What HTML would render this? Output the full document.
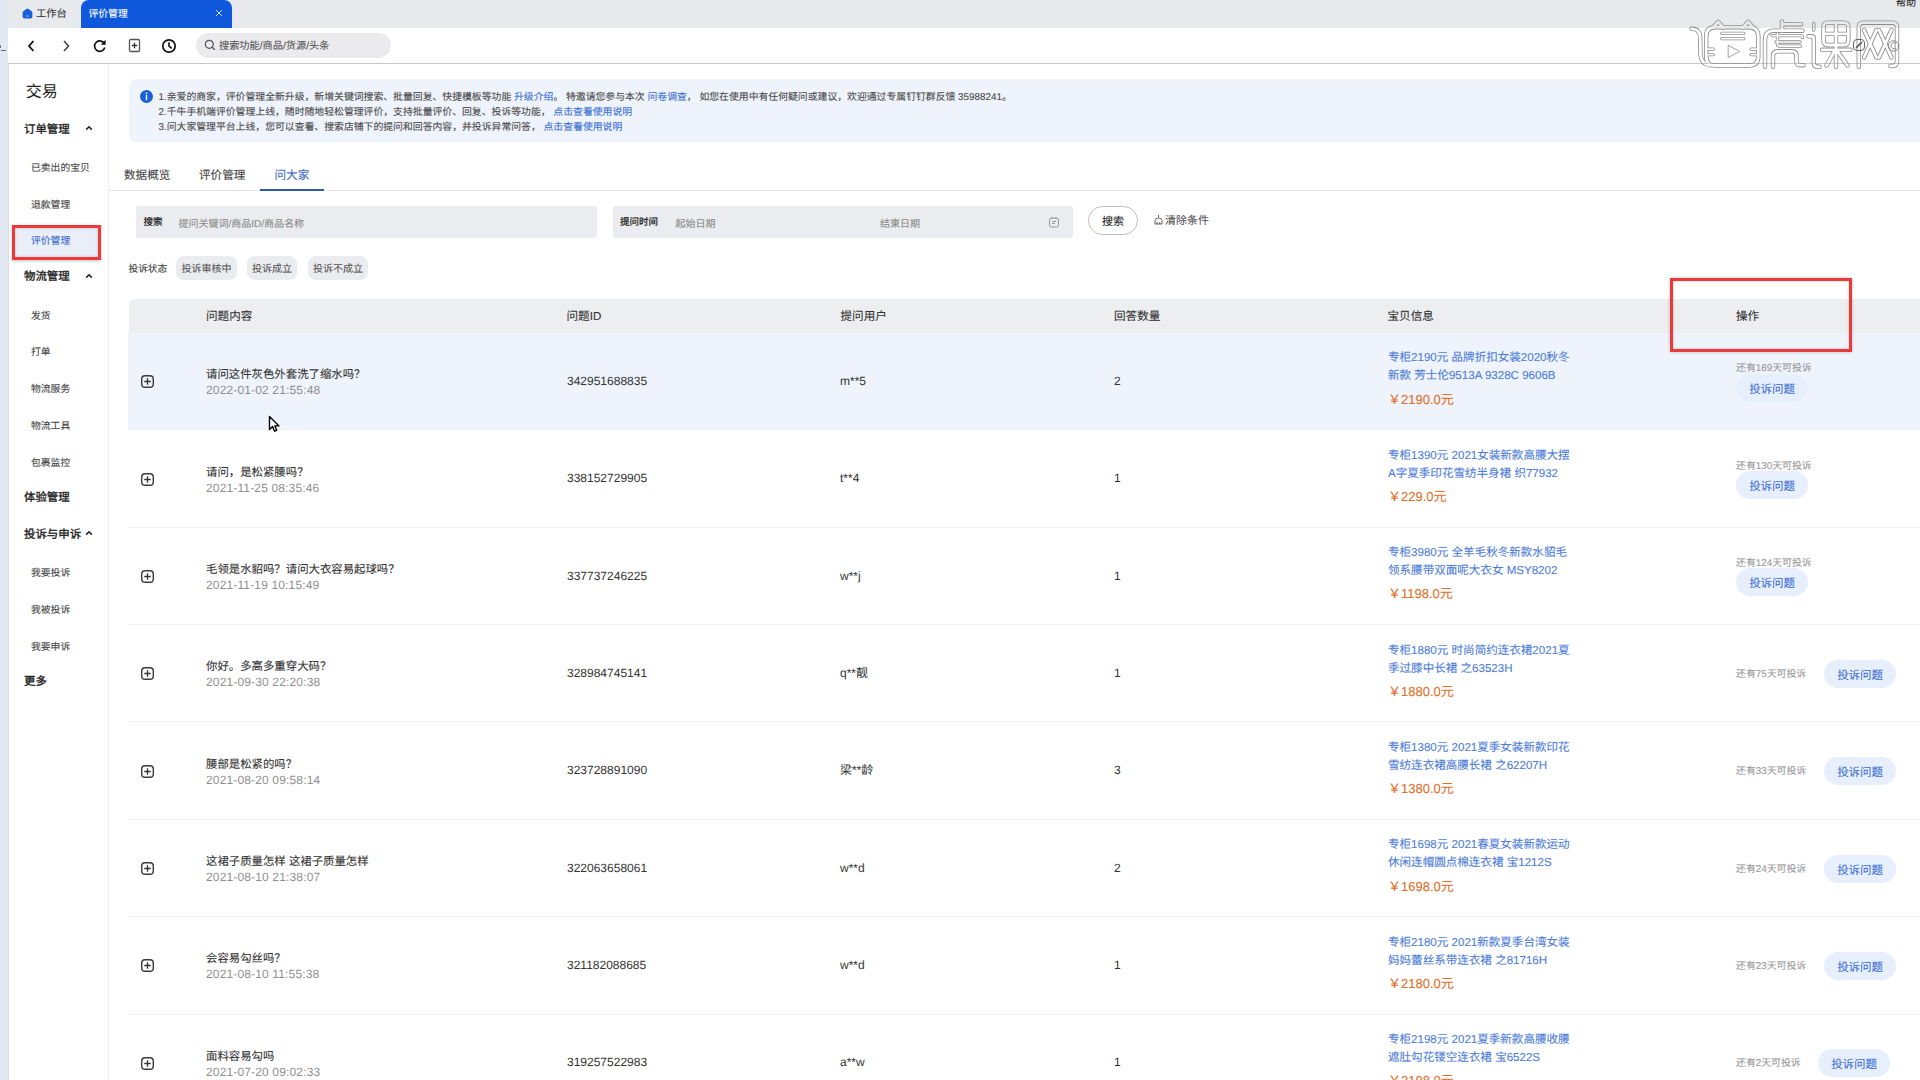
<!DOCTYPE html>
<html lang="zh-CN"><head><meta charset="utf-8">
<style>
*{box-sizing:border-box}
html,body{margin:0;padding:0}
body{text-rendering:geometricPrecision;-webkit-text-stroke-width:0.1px;width:1920px;height:1080px;position:relative;overflow:hidden;background:#fff;font-family:"Liberation Sans",sans-serif;color:#333}
.a{position:absolute;white-space:nowrap}
#strip{left:0;top:0;width:9px;height:1080px;background:#e3e9f4;border-right:1px solid #dcdde2}
#tabbar{left:8px;top:0;width:1912px;height:28px;background:#e8e9ed}
#acttab{left:81px;top:0;width:151px;height:28px;background:#0f58dc;border-radius:8px 8px 0 0}
#nav{left:8px;top:28px;width:1912px;height:36px;background:#fff;border-bottom:1px solid #c9c9c9}
#side{left:9px;top:64px;width:100px;height:1016px;background:#fff;border-right:1px solid #eeeeee}
.sh{font-size:11.45px;line-height:14px;color:#222;-webkit-text-stroke-width:0.35px}
.sc{font-size:9.8px;line-height:12px;color:#444}
#notice{left:129px;top:79px;width:1800px;height:63px;background:#eff3fb;border-radius:7px}
.nt{font-size:9.85px;line-height:12px;color:#4a4a4a}
.lk{color:#3a6fd6}
.tab{font-size:11.6px;line-height:14px;color:#444;top:168.5px}
.box{background:#ebecef;border-radius:2px}
.lab{font-size:9.5px;line-height:12px;color:#222;-webkit-text-stroke-width:0.25px}
.ph{font-size:10px;line-height:12px;color:#8a8a8a}
.chip{background:#ebecef;border-radius:8px;height:24px;top:256px;font-size:10px;line-height:27px;color:#555;text-align:center}
#thead{left:129px;top:298.5px;width:1800px;height:34.6px;background:#edeef0;border-radius:6px 0 0 0}
.th{font-size:11.6px;line-height:14px;color:#333;top:309.7px}
#tbody{left:128px;top:0;width:1800px;height:1080px}
.row{left:0;width:1800px;border-bottom:1px solid #efefef}
.plus{width:13px;height:13px}
.q{font-size:11.4px;line-height:13px;color:#333}
.dt{font-size:12px;line-height:14px;color:#8f8f8f;-webkit-text-stroke-width:0;letter-spacing:0.15px}
.num{font-size:12px;line-height:14px;color:#333;-webkit-text-stroke-width:0}
.prod{font-size:11.55px;line-height:18px;color:#4d7dd8}
.price{font-size:13px;line-height:15px;color:#e0702a}
.days{font-size:9.9px;line-height:12px;color:#999}
.btn{width:72px;height:28px;border-radius:14px;background:#e8effc;color:#3f72d6;-webkit-text-stroke-width:0.1px;font-size:11.45px;line-height:32px;text-align:center}
</style></head><body>
<div class="a" id="strip"></div>
<div class="a" id="tabbar"></div>
<div class="a" style="left:0;top:45px;width:1px;height:3px;background:#777"></div><div class="a" style="left:1px;top:50px;width:5px;height:1px;background:#666"></div>
<svg class="a" style="left:22px;top:8px" width="11" height="11" viewBox="0 0 11 11"><path d="M0.6 4.8 Q0.6 3.8 1.6 3 L4.4 0.9 Q5.5 0.1 6.6 0.9 L9.4 3 Q10.4 3.8 10.4 4.8 L10.4 8.8 Q10.4 10.6 8.6 10.6 L2.4 10.6 Q0.6 10.6 0.6 8.8 Z" fill="#1a5fd8"/><rect x="4.6" y="7.6" width="1.8" height="0.9" fill="#cfe0ff"/></svg>
<div class="a" style="left:36px;top:8px;font-size:10.3px;line-height:13px;color:#333">工作台</div>
<div class="a" id="acttab"></div>
<div class="a" style="left:88.5px;top:8px;font-size:9.8px;line-height:13px;color:#fff">评价管理</div>
<svg class="a" style="left:215px;top:9px" width="8" height="8" viewBox="0 0 8 8"><path d="M1 1 L7 7 M7 1 L1 7" stroke="#fff" stroke-width="0.8"/></svg>
<div class="a" style="left:1896px;top:-2px;font-size:10px;line-height:12px;color:#222">帮助</div>
<div class="a" id="nav"></div>
<svg class="a" style="left:26px;top:39px" width="12" height="14" viewBox="0 0 12 14"><path d="M7.5 2 L3 7 L7.5 12" fill="none" stroke="#111" stroke-width="1.8"/></svg>
<svg class="a" style="left:60px;top:39px" width="12" height="14" viewBox="0 0 12 14"><path d="M4 2 L8.5 7 L4 12" fill="none" stroke="#444" stroke-width="1.6"/></svg>
<svg class="a" style="left:92px;top:38px" width="16" height="16" viewBox="0 0 16 16"><path d="M12.6 6.2 A5.2 5.2 0 1 0 12.8 9.5" fill="none" stroke="#111" stroke-width="1.7"/><path d="M13.6 1.8 L13.6 6.8 L8.8 6.8 Z" fill="#111"/></svg>
<svg class="a" style="left:128px;top:38px" width="14" height="16" viewBox="0 0 14 16"><rect x="1.5" y="1.5" width="10" height="12" rx="1.2" fill="none" stroke="#555" stroke-width="1.3"/><path d="M6.5 4.8 V10.2 M3.8 7.5 H9.2" stroke="#333" stroke-width="1.3"/></svg>
<svg class="a" style="left:161px;top:38px" width="16" height="16" viewBox="0 0 16 16"><circle cx="8" cy="8" r="6.2" fill="none" stroke="#111" stroke-width="1.7"/><path d="M8 4.2 V8.2 L10.8 10.4" fill="none" stroke="#111" stroke-width="1.6"/></svg>
<div class="a" style="left:196px;top:33px;width:195px;height:25px;border-radius:13px;background:#ebebee"></div>
<svg class="a" style="left:204px;top:39px" width="12" height="12" viewBox="0 0 12 12"><circle cx="5.3" cy="5.3" r="4" fill="none" stroke="#555" stroke-width="1.2"/><path d="M8.2 8.2 L10.8 10.8" stroke="#555" stroke-width="1.3"/></svg>
<div class="a" style="left:219px;top:41px;font-size:10.2px;line-height:12px;color:#555">搜索功能/商品/货源/头条</div>

<div class="a" id="side"></div>
<div class="a" style="left:25.8px;top:82.5px;font-size:16px;line-height:19px;color:#222;-webkit-text-stroke-width:0">交易</div>
<div class="a" style="left:12px;top:225px;width:89px;height:35px;background:#e9eef8;border:3px solid #eb3a3a;box-shadow:0 1px 3px rgba(0,0,0,.25), inset 0 0 3px rgba(0,0,0,.22)"></div>
<div class="a sh" style="left:24px;top:122.5px">订单管理</div>
<svg class="a" style="left:85px;top:125.0px" width="8" height="6" viewBox="0 0 8 6"><path d="M1.2 4.6 L4 1.8 L6.8 4.6" fill="none" stroke="#222" stroke-width="1.6"/></svg>
<div class="a sc" style="left:31px;top:163.2px;color:#444">已卖出的宝贝</div>
<div class="a sc" style="left:31px;top:200.2px;color:#444">退款管理</div>
<div class="a sc" style="left:31px;top:236.0px;color:#3b6bd0">评价管理</div>
<div class="a sh" style="left:24px;top:270.1px">物流管理</div>
<svg class="a" style="left:85px;top:272.6px" width="8" height="6" viewBox="0 0 8 6"><path d="M1.2 4.6 L4 1.8 L6.8 4.6" fill="none" stroke="#222" stroke-width="1.6"/></svg>
<div class="a sc" style="left:31px;top:310.5px;color:#444">发货</div>
<div class="a sc" style="left:31px;top:347.0px;color:#444">打单</div>
<div class="a sc" style="left:31px;top:383.7px;color:#444">物流服务</div>
<div class="a sc" style="left:31px;top:420.7px;color:#444">物流工具</div>
<div class="a sc" style="left:31px;top:457.7px;color:#444">包裹监控</div>
<div class="a sh" style="left:24px;top:490.5px">体验管理</div>
<div class="a sh" style="left:24px;top:527.5px">投诉与申诉</div>
<svg class="a" style="left:85px;top:530.0px" width="8" height="6" viewBox="0 0 8 6"><path d="M1.2 4.6 L4 1.8 L6.8 4.6" fill="none" stroke="#222" stroke-width="1.6"/></svg>
<div class="a sc" style="left:31px;top:567.7px;color:#444">我要投诉</div>
<div class="a sc" style="left:31px;top:604.7px;color:#444">我被投诉</div>
<div class="a sc" style="left:31px;top:641.7px;color:#444">我要申诉</div>
<div class="a sh" style="left:24px;top:674.5px">更多</div>

<div class="a" id="notice"></div>
<svg class="a" style="left:139.5px;top:89.5px" width="13" height="13" viewBox="0 0 13 13"><circle cx="6.5" cy="6.5" r="6.5" fill="#1a5fd6"/><rect x="5.8" y="2.6" width="1.4" height="1.5" fill="#fff"/><rect x="5.8" y="5" width="1.4" height="5.2" fill="#fff"/></svg>
<div class="a nt" style="left:158.5px;top:91.5px">1.亲爱的商家，评价管理全新升级，新增关键词搜索、批量回复、快捷模板等功能 <span class="lk">升级介绍</span>。 特邀请您参与本次 <span class="lk">问卷调查</span>， 如您在使用中有任何疑问或建议，欢迎通过专属钉钉群反馈 35988241。</div>
<div class="a nt" style="left:158.5px;top:106.5px">2.千牛手机端评价管理上线，随时随地轻松管理评价，支持批量评价、回复、投诉等功能， <span class="lk">点击查看使用说明</span></div>
<div class="a nt" style="left:158.5px;top:121.5px">3.问大家管理平台上线，您可以查看、搜索店铺下的提问和回答内容，并投诉异常问答， <span class="lk">点击查看使用说明</span></div>

<div class="a tab" style="left:124px">数据概览</div>
<div class="a tab" style="left:199px">评价管理</div>
<div class="a tab" style="left:274.5px;color:#3d6bc4">问大家</div>
<div class="a" style="left:109px;top:190px;width:1811px;height:1px;background:#e3e5ea"></div>
<div class="a" style="left:260px;top:189px;width:64px;height:2px;background:#2f5ca6"></div>

<div class="a box" style="left:136px;top:205.5px;width:461px;height:32px"></div>
<div class="a lab" style="left:143.5px;top:217px">搜索</div>
<div class="a ph" style="left:178.5px;top:219px">提问关键词/商品ID/商品名称</div>
<div class="a box" style="left:613px;top:205.5px;width:460px;height:32px"></div>
<div class="a lab" style="left:620px;top:217px">提问时间</div>
<div class="a ph" style="left:675.5px;top:218.5px">起始日期</div>
<div class="a ph" style="left:880px;top:218.5px">结束日期</div>
<svg class="a" style="left:1048px;top:216px" width="12" height="12" viewBox="0 0 12 12"><rect x="1.5" y="2" width="9" height="9" rx="2" fill="none" stroke="#999" stroke-width="1"/><path d="M4 1 V3 M8 1 V3 M4 5.5 H8 M4 7.5 H7" stroke="#999" stroke-width="1"/></svg>
<div class="a" style="left:1088px;top:205.5px;width:50px;height:29.5px;border:1px solid #bdbdbd;border-radius:15px;background:#fff"></div>
<div class="a" style="left:1102px;top:215.5px;font-size:11px;line-height:13px;color:#222">搜索</div>
<svg class="a" style="left:1153px;top:214px" width="11" height="11" viewBox="0 0 11 11"><path d="M5.5 1 V3.5 M2 10 V6.5 Q2 4 5.5 4 Q9 4 9 6.5 V10 Z M4.2 10 V8 M6.8 10 V8" fill="none" stroke="#666" stroke-width="1"/></svg>
<div class="a" style="left:1165px;top:215px;font-size:11px;line-height:13px;color:#555">清除条件</div>

<div class="a" style="left:128.5px;top:264px;font-size:9.7px;line-height:12px;color:#444">投诉状态</div>
<div class="a chip" style="left:176px;width:61px">投诉审核中</div>
<div class="a chip" style="left:247px;width:50px">投诉成立</div>
<div class="a chip" style="left:308px;width:60px">投诉不成立</div>

<div class="a" id="thead"></div>
<div class="a th" style="left:206px">问题内容</div>
<div class="a th" style="left:566.5px">问题ID</div>
<div class="a th" style="left:840.5px">提问用户</div>
<div class="a th" style="left:1114px">回答数量</div>
<div class="a th" style="left:1387.5px">宝贝信息</div>
<div class="a th" style="left:1736px">操作</div>

<div class="a" id="tbody">
<div class="a row" style="top:333.10px;height:97.35px;background:#eff3fc">
<svg class="a plus" style="left:12.7px;top:42.07px" width="13" height="13" viewBox="0 0 13 13"><rect x="0.7" y="0.7" width="11.6" height="11.6" rx="3.3" fill="none" stroke="#3a3a3a" stroke-width="1.4"/><path d="M3.3 6.5 H9.7 M6.5 3.3 V9.7" stroke="#333" stroke-width="1.3"/></svg>
<div class="a q" style="left:78px;top:36.17px">请问这件灰色外套洗了缩水吗？</div>
<div class="a dt" style="left:78px;top:50.17px">2022-01-02 21:55:48</div>
<div class="a num" style="left:439px;top:40.88px">342951688835</div>
<div class="a num" style="left:712px;top:40.88px">m**5</div>
<div class="a num" style="left:986px;top:40.88px">2</div>
<div class="a prod" style="left:1260px;top:16.38px">专柜2190元 品牌折扣女装2020秋冬<br>新款 芳士伦9513A 9328C 9606B</div>
<div class="a price" style="left:1260px;top:58.67px">￥2190.0元</div>
<div class="a days" style="left:1608px;top:30.17px">还有169天可投诉</div>
<div class="a btn" style="left:1608px;top:40.67px">投诉问题</div>
</div>
<div class="a row" style="top:430.45px;height:97.35px;background:#fff">
<svg class="a plus" style="left:12.7px;top:42.07px" width="13" height="13" viewBox="0 0 13 13"><rect x="0.7" y="0.7" width="11.6" height="11.6" rx="3.3" fill="none" stroke="#3a3a3a" stroke-width="1.4"/><path d="M3.3 6.5 H9.7 M6.5 3.3 V9.7" stroke="#333" stroke-width="1.3"/></svg>
<div class="a q" style="left:78px;top:36.17px">请问，是松紧腰吗？</div>
<div class="a dt" style="left:78px;top:50.17px">2021-11-25 08:35:46</div>
<div class="a num" style="left:439px;top:40.88px">338152729905</div>
<div class="a num" style="left:712px;top:40.88px">t**4</div>
<div class="a num" style="left:986px;top:40.88px">1</div>
<div class="a prod" style="left:1260px;top:16.38px">专柜1390元 2021女装新款高腰大摆<br>A字夏季印花雪纺半身裙 织77932</div>
<div class="a price" style="left:1260px;top:58.67px">￥229.0元</div>
<div class="a days" style="left:1608px;top:30.17px">还有130天可投诉</div>
<div class="a btn" style="left:1608px;top:40.67px">投诉问题</div>
</div>
<div class="a row" style="top:527.80px;height:97.35px;background:#fff">
<svg class="a plus" style="left:12.7px;top:42.07px" width="13" height="13" viewBox="0 0 13 13"><rect x="0.7" y="0.7" width="11.6" height="11.6" rx="3.3" fill="none" stroke="#3a3a3a" stroke-width="1.4"/><path d="M3.3 6.5 H9.7 M6.5 3.3 V9.7" stroke="#333" stroke-width="1.3"/></svg>
<div class="a q" style="left:78px;top:36.17px">毛领是水貂吗？请问大衣容易起球吗？</div>
<div class="a dt" style="left:78px;top:50.17px">2021-11-19 10:15:49</div>
<div class="a num" style="left:439px;top:40.88px">337737246225</div>
<div class="a num" style="left:712px;top:40.88px">w**j</div>
<div class="a num" style="left:986px;top:40.88px">1</div>
<div class="a prod" style="left:1260px;top:16.38px">专柜3980元 全羊毛秋冬新款水貂毛<br>领系腰带双面呢大衣女 MSY8202</div>
<div class="a price" style="left:1260px;top:58.67px">￥1198.0元</div>
<div class="a days" style="left:1608px;top:30.17px">还有124天可投诉</div>
<div class="a btn" style="left:1608px;top:40.67px">投诉问题</div>
</div>
<div class="a row" style="top:625.15px;height:97.35px;background:#fff">
<svg class="a plus" style="left:12.7px;top:42.07px" width="13" height="13" viewBox="0 0 13 13"><rect x="0.7" y="0.7" width="11.6" height="11.6" rx="3.3" fill="none" stroke="#3a3a3a" stroke-width="1.4"/><path d="M3.3 6.5 H9.7 M6.5 3.3 V9.7" stroke="#333" stroke-width="1.3"/></svg>
<div class="a q" style="left:78px;top:36.17px">你好。多高多重穿大码？</div>
<div class="a dt" style="left:78px;top:50.17px">2021-09-30 22:20:38</div>
<div class="a num" style="left:439px;top:40.88px">328984745141</div>
<div class="a num" style="left:712px;top:40.88px">q**靓</div>
<div class="a num" style="left:986px;top:40.88px">1</div>
<div class="a prod" style="left:1260px;top:16.38px">专柜1880元 时尚简约连衣裙2021夏<br>季过膝中长裙 之63523H</div>
<div class="a price" style="left:1260px;top:58.67px">￥1880.0元</div>
<div class="a days" style="left:1608px;top:43.67px">还有75天可投诉</div>
<div class="a btn" style="left:1696px;top:34.67px">投诉问题</div>
</div>
<div class="a row" style="top:722.50px;height:97.35px;background:#fff">
<svg class="a plus" style="left:12.7px;top:42.07px" width="13" height="13" viewBox="0 0 13 13"><rect x="0.7" y="0.7" width="11.6" height="11.6" rx="3.3" fill="none" stroke="#3a3a3a" stroke-width="1.4"/><path d="M3.3 6.5 H9.7 M6.5 3.3 V9.7" stroke="#333" stroke-width="1.3"/></svg>
<div class="a q" style="left:78px;top:36.17px">腰部是松紧的吗？</div>
<div class="a dt" style="left:78px;top:50.17px">2021-08-20 09:58:14</div>
<div class="a num" style="left:439px;top:40.88px">323728891090</div>
<div class="a num" style="left:712px;top:40.88px">梁**龄</div>
<div class="a num" style="left:986px;top:40.88px">3</div>
<div class="a prod" style="left:1260px;top:16.38px">专柜1380元 2021夏季女装新款印花<br>雪纺连衣裙高腰长裙 之62207H</div>
<div class="a price" style="left:1260px;top:58.67px">￥1380.0元</div>
<div class="a days" style="left:1608px;top:43.67px">还有33天可投诉</div>
<div class="a btn" style="left:1696px;top:34.67px">投诉问题</div>
</div>
<div class="a row" style="top:819.85px;height:97.35px;background:#fff">
<svg class="a plus" style="left:12.7px;top:42.07px" width="13" height="13" viewBox="0 0 13 13"><rect x="0.7" y="0.7" width="11.6" height="11.6" rx="3.3" fill="none" stroke="#3a3a3a" stroke-width="1.4"/><path d="M3.3 6.5 H9.7 M6.5 3.3 V9.7" stroke="#333" stroke-width="1.3"/></svg>
<div class="a q" style="left:78px;top:36.17px">这裙子质量怎样 这裙子质量怎样</div>
<div class="a dt" style="left:78px;top:50.17px">2021-08-10 21:38:07</div>
<div class="a num" style="left:439px;top:40.88px">322063658061</div>
<div class="a num" style="left:712px;top:40.88px">w**d</div>
<div class="a num" style="left:986px;top:40.88px">2</div>
<div class="a prod" style="left:1260px;top:16.38px">专柜1698元 2021春夏女装新款运动<br>休闲连帽圆点棉连衣裙 宝1212S</div>
<div class="a price" style="left:1260px;top:58.67px">￥1698.0元</div>
<div class="a days" style="left:1608px;top:43.67px">还有24天可投诉</div>
<div class="a btn" style="left:1696px;top:34.67px">投诉问题</div>
</div>
<div class="a row" style="top:917.20px;height:97.35px;background:#fff">
<svg class="a plus" style="left:12.7px;top:42.07px" width="13" height="13" viewBox="0 0 13 13"><rect x="0.7" y="0.7" width="11.6" height="11.6" rx="3.3" fill="none" stroke="#3a3a3a" stroke-width="1.4"/><path d="M3.3 6.5 H9.7 M6.5 3.3 V9.7" stroke="#333" stroke-width="1.3"/></svg>
<div class="a q" style="left:78px;top:36.17px">会容易勾丝吗？</div>
<div class="a dt" style="left:78px;top:50.17px">2021-08-10 11:55:38</div>
<div class="a num" style="left:439px;top:40.88px">321182088685</div>
<div class="a num" style="left:712px;top:40.88px">w**d</div>
<div class="a num" style="left:986px;top:40.88px">1</div>
<div class="a prod" style="left:1260px;top:16.38px">专柜2180元 2021新款夏季台湾女装<br>妈妈蕾丝系带连衣裙 之81716H</div>
<div class="a price" style="left:1260px;top:58.67px">￥2180.0元</div>
<div class="a days" style="left:1608px;top:43.67px">还有23天可投诉</div>
<div class="a btn" style="left:1696px;top:34.67px">投诉问题</div>
</div>
<div class="a row" style="top:1014.55px;height:97.35px;background:#fff">
<svg class="a plus" style="left:12.7px;top:42.07px" width="13" height="13" viewBox="0 0 13 13"><rect x="0.7" y="0.7" width="11.6" height="11.6" rx="3.3" fill="none" stroke="#3a3a3a" stroke-width="1.4"/><path d="M3.3 6.5 H9.7 M6.5 3.3 V9.7" stroke="#333" stroke-width="1.3"/></svg>
<div class="a q" style="left:78px;top:36.17px">面料容易勾吗</div>
<div class="a dt" style="left:78px;top:50.17px">2021-07-20 09:02:33</div>
<div class="a num" style="left:439px;top:40.88px">319257522983</div>
<div class="a num" style="left:712px;top:40.88px">a**w</div>
<div class="a num" style="left:986px;top:40.88px">1</div>
<div class="a prod" style="left:1260px;top:16.38px">专柜2198元 2021夏季新款高腰收腰<br>遮肚勾花镂空连衣裙 宝6522S</div>
<div class="a price" style="left:1260px;top:58.67px">￥2198.0元</div>
<div class="a days" style="left:1608px;top:43.67px">还有2天可投诉</div>
<div class="a btn" style="left:1690px;top:34.67px">投诉问题</div>
</div>
</div>

<div class="a" style="left:1670px;top:278px;width:182px;height:74px;border:3px solid #eb3a3a;box-shadow:0 0 3px rgba(0,0,0,.25), inset 0 0 3px rgba(0,0,0,.2)"></div>

<svg class="a" style="left:268px;top:415px" width="13" height="18" viewBox="0 0 13 18"><path d="M1.5 1.5 L1.5 14.6 L4.6 11.6 L6.6 16.2 L8.7 15.3 L6.9 10.9 L11 10.9 Z" fill="#fff" stroke="#000" stroke-width="1.4" stroke-linejoin="round"/></svg>

<svg class="a" style="left:1680px;top:15px" width="230" height="60" viewBox="1680 15 230 60">
<mask id="lm" maskUnits="userSpaceOnUse" x="1680" y="15" width="230" height="60"><rect x="1680" y="15" width="230" height="60" fill="#fff"/><g fill="none" stroke="#000" stroke-width="2.8" stroke-linecap="round" stroke-linejoin="round"><path d="M1715 27.2 H1749 Q1758.3 27.2 1758.3 36.5 V56.2 Q1758.3 65.5 1749 65.5 H1715.5 Q1706.2 65.5 1706.2 56.2 V36.5 Q1706.2 27.2 1715 27.2 Z"/><path d="M1713 27.5 L1718.3 21.8 L1723 27.5"/><path d="M1743 27.5 L1748.3 21.8 L1753 27.5"/><path d="M1691.5 28.8 Q1700 28.5 1700.2 38 L1700.5 55 Q1701.5 64.5 1710 65.3"/><path d="M1765 66.8 V40 Q1765 30.7 1774 30.7 H1802.5"/><path d="M1782 21.5 V31"/><path d="M1784 24.2 H1801"/><path d="M1773 66.8 V56 Q1773 51.3 1778 51.3 H1792 Q1796.5 51.3 1796.5 56 V62 Q1796.5 65.2 1800 65.2 H1803.5"/><path d="M1808.5 36.3 H1811.5 Q1813.8 36.3 1813.8 39 V63 Q1813.8 66.8 1818 66.8 H1819.5"/><path d="M1828 22.6 H1844 Q1848.3 22.6 1848.3 27 V40.5 Q1848.3 45 1844 45 H1828 Q1823.5 45 1823.5 40.5 V27 Q1823.5 22.6 1828 22.6 Z"/><path d="M1836 22.6 V66.8"/><path d="M1823.5 33.9 H1848.3"/><path d="M1822 49.8 H1850.5"/><path d="M1834 52 L1826.5 65.5"/><path d="M1838 52 L1847.5 65.5"/><path d="M1858.8 66.8 V27 Q1858.8 22.7 1863 22.7 H1892.5 Q1897 22.7 1897 27 V61.5 Q1897 66 1892 66 H1890.5"/><path d="M1864 30 L1876.5 57.5"/><path d="M1876.5 30 L1864 57.5"/><path d="M1879 30 L1891.5 57.5"/><path d="M1891.5 30 L1879 57.5"/></g><g fill="none" stroke="#000" stroke-width="1.7" stroke-linecap="round" stroke-linejoin="round"><path d="M1721.8 33.4 H1743.8"/><path d="M1721.8 38.6 H1743.8"/><path d="M1707 49.2 H1713.2"/><path d="M1707 54.6 H1713.2"/><path d="M1751.2 49.2 H1757.5"/><path d="M1751.2 54.6 H1757.5"/><path d="M1772 35.6 H1800.5 Q1802.5 35.6 1802.5 37.5"/><path d="M1776 42 H1800"/><path d="M1777.5 33 V44 Q1777.5 46.2 1780 46.2 H1800.5"/><path d="M1813.8 23.5 V30"/></g></mask>
<g mask="url(#lm)" fill="none" stroke="#8c8c8c" stroke-width="4.4" stroke-linecap="round" stroke-linejoin="round"><path d="M1715 27.2 H1749 Q1758.3 27.2 1758.3 36.5 V56.2 Q1758.3 65.5 1749 65.5 H1715.5 Q1706.2 65.5 1706.2 56.2 V36.5 Q1706.2 27.2 1715 27.2 Z"/><path d="M1713 27.5 L1718.3 21.8 L1723 27.5"/><path d="M1743 27.5 L1748.3 21.8 L1753 27.5"/><path d="M1691.5 28.8 Q1700 28.5 1700.2 38 L1700.5 55 Q1701.5 64.5 1710 65.3"/><path d="M1765 66.8 V40 Q1765 30.7 1774 30.7 H1802.5"/><path d="M1782 21.5 V31"/><path d="M1784 24.2 H1801"/><path d="M1773 66.8 V56 Q1773 51.3 1778 51.3 H1792 Q1796.5 51.3 1796.5 56 V62 Q1796.5 65.2 1800 65.2 H1803.5"/><path d="M1808.5 36.3 H1811.5 Q1813.8 36.3 1813.8 39 V63 Q1813.8 66.8 1818 66.8 H1819.5"/><path d="M1828 22.6 H1844 Q1848.3 22.6 1848.3 27 V40.5 Q1848.3 45 1844 45 H1828 Q1823.5 45 1823.5 40.5 V27 Q1823.5 22.6 1828 22.6 Z"/><path d="M1836 22.6 V66.8"/><path d="M1823.5 33.9 H1848.3"/><path d="M1822 49.8 H1850.5"/><path d="M1834 52 L1826.5 65.5"/><path d="M1838 52 L1847.5 65.5"/><path d="M1858.8 66.8 V27 Q1858.8 22.7 1863 22.7 H1892.5 Q1897 22.7 1897 27 V61.5 Q1897 66 1892 66 H1890.5"/><path d="M1864 30 L1876.5 57.5"/><path d="M1876.5 30 L1864 57.5"/><path d="M1879 30 L1891.5 57.5"/><path d="M1891.5 30 L1879 57.5"/></g>
<g mask="url(#lm)" fill="none" stroke="#8c8c8c" stroke-width="3.3" stroke-linecap="round" stroke-linejoin="round"><path d="M1721.8 33.4 H1743.8"/><path d="M1721.8 38.6 H1743.8"/><path d="M1707 49.2 H1713.2"/><path d="M1707 54.6 H1713.2"/><path d="M1751.2 49.2 H1757.5"/><path d="M1751.2 54.6 H1757.5"/><path d="M1772 35.6 H1800.5 Q1802.5 35.6 1802.5 37.5"/><path d="M1776 42 H1800"/><path d="M1777.5 33 V44 Q1777.5 46.2 1780 46.2 H1800.5"/><path d="M1813.8 23.5 V30"/></g>
<path d="M1728.2 45.2 L1739.6 51.4 L1728.2 57.6 Z" fill="none" stroke="#8c8c8c" stroke-width="0.8" stroke-linejoin="round"/>
<rect x="1853.5" y="39.5" width="11" height="11" rx="3.5" fill="none" stroke="#555" stroke-width="0.9"/>
<path d="M1856.5 47.5 L1861.5 42.5" stroke="#555" stroke-width="1.6" stroke-linecap="round"/>
<circle cx="1893.5" cy="46" r="5.2" fill="none" stroke="#777" stroke-width="0.9"/>
<path d="M1895.5 43.3 A3 3 0 1 0 1896 48" fill="none" stroke="#777" stroke-width="0.8"/>
</svg>
</body></html>
